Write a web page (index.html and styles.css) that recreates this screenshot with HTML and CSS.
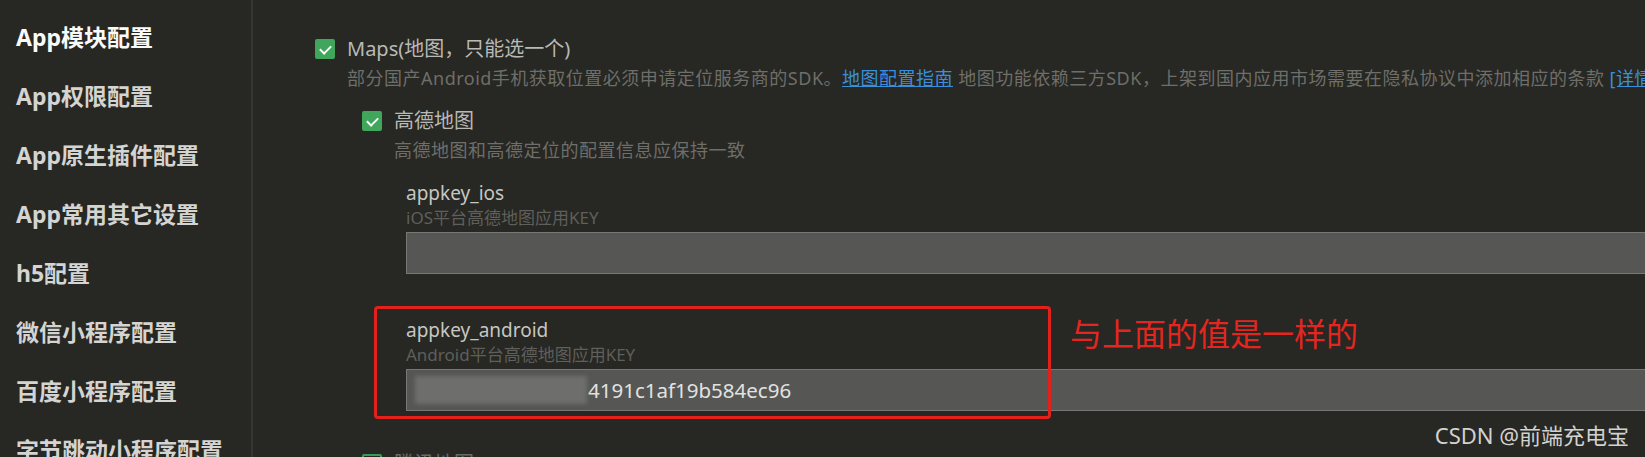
FILE: index.html
```html
<!DOCTYPE html>
<html lang="zh-CN">
<head>
    <meta charset="UTF-8">
    <title>App模块配置</title>
    <link rel="stylesheet" href="styles.css">
</head>
<body>
<div class="page">
    <!--左侧菜单-->
    <aside class="side">
        <ul class="menu">
            <li class="active">App模块配置</li>
            <li>App权限配置</li>
            <li>App原生插件配置</li>
            <li>App常用其它设置</li>
            <li>h5配置</li>
            <li>微信小程序配置</li>
            <li>百度小程序配置</li>
            <li>字节跳动小程序配置</li>
        </ul>
    </aside>

    <!--主要内容-->
    <main class="main">
        <div class="opt">
            <span class="check on"></span>
            <div class="opt-body">
                <p class="opt-title">Maps(地图，只能选一个)</p>
                <p class="opt-desc">部分国产Android手机获取位置必须申请定位服务商的SDK。<a href="#">地图配置指南</a> 地图功能依赖三方SDK，上架到国内应用市场需要在隐私协议中添加相应的条款 <a href="#">[详情]</a></p>

                <div class="opt sub">
                    <span class="check on"></span>
                    <div class="opt-body">
                        <p class="opt-title">高德地图</p>
                        <p class="opt-desc">高德地图和高德定位的配置信息应保持一致</p>

                        <div class="field">
                            <p class="field-name">appkey_ios</p>
                            <p class="field-desc">iOS平台高德地图应用KEY</p>
                            <div class="input"></div>
                        </div>

                        <div class="field marked">
                            <p class="field-name">appkey_android</p>
                            <p class="field-desc">Android平台高德地图应用KEY</p>
                            <div class="input">
                                <span class="blur"></span>
                                <span class="value">4191c1af19b584ec96</span>
                            </div>
                            <!-- 标注 -->
                            <div class="note-box"></div>
                            <p class="note-text">与上面的值是一样的</p>
                        </div>
                    </div>
                </div>

                <div class="opt sub next">
                    <span class="check"></span>
                    <div class="opt-body">
                        <p class="opt-title">腾讯地图</p>
                    </div>
                </div>
            </div>
        </div>
    </main>

    <div class="watermark">CSDN @前端充电宝</div>
</div>
</body>
</html>
```

FILE: styles.css
```css
*{
    margin: 0;
    padding: 0;
    list-style: none;
    box-sizing: border-box;
}
body{
    background-color: #272723;
    font-family: "Noto Sans", "Noto Sans CJK SC", sans-serif;
    overflow: hidden;
}
.page{
    width: 1645px;
    height: 457px;
    display: flex;
    position: relative;
    overflow: hidden;
}

/*左侧菜单*/
.side{
    width: 253px;
    flex-shrink: 0;
    border-right: 2px solid #37372f;
}
.menu{
    padding: 8px 0 0 16px;
}
.menu li{
    height: 59px;
    line-height: 59px;
    font-size: 23px;
    font-weight: bold;
    color: #d4d4d2;
    white-space: nowrap;
}
.menu .active{
    color: #fafafa;
}

/*主要内容*/
.main{
    flex: 1;
    min-width: 0;
    padding: 36px 0 0 62px;
}
.opt{
    display: flex;
    align-items: flex-start;
    gap: 12px;
}
.opt.sub{
    margin: 18px 0 0 15px;
}
.opt.next{
    margin-top: 40px;
}
.opt-body{
    flex: 1;
    min-width: 0;
}
.check{
    width: 20px;
    height: 20px;
    margin-top: 3px;
    flex-shrink: 0;
    border-radius: 2px;
    border: 2px solid #3c9a58;
    position: relative;
}
.check.on{
    background-color: #3fa65c;
    border-color: #3fa65c;
}
.check.on::after{
    content: "";
    position: absolute;
    left: 5px;
    top: 2px;
    width: 5px;
    height: 9px;
    border: solid #fff;
    border-width: 0 2px 2px 0;
    transform: rotate(45deg);
}
.opt-title{
    font-size: 20px;
    line-height: 26px;
    color: #b9b9b5;
    white-space: nowrap;
}
.next .opt-title{
    color: #6a6a66;
}
.opt-desc{
    margin-top: 4px;
    font-size: 18px;
    line-height: 24px;
    letter-spacing: 0.5px;
    color: #6e6e6a;
    white-space: nowrap;
}
.opt-desc a{
    color: #3a8fdc;
}

/*输入项*/
.field{
    margin: 18px -20px 0 12px;
    position: relative;
}
.field + .field{
    margin-top: 43px;
}
.field-name{
    font-size: 19px;
    line-height: 26px;
    color: #c6c6c2;
}
.field-desc{
    font-size: 17px;
    line-height: 24px;
    color: #5f5f5b;
    white-space: nowrap;
}
.input{
    margin-top: 2px;
    height: 42px;
    background-color: #565654;
    border: 1px solid #777775;
    display: flex;
    align-items: center;
    padding-left: 8px;
}
.blur{
    width: 172px;
    height: 28px;
    background-color: #6e6e6c;
    filter: blur(2px);
}
.value{
    margin-left: 1px;
    font-size: 20.5px;
    color: #e2e2e0;
}

/*标注*/
.note-box{
    position: absolute;
    left: -32px;
    top: -11px;
    width: 677px;
    height: 113px;
    border: 3px solid #e3201a;
    border-radius: 4px;
}
.note-text{
    position: absolute;
    left: 664px;
    top: -3px;
    font-size: 32px;
    line-height: 40px;
    color: #e3261f;
    white-space: nowrap;
}

.watermark{
    position: absolute;
    right: 16px;
    bottom: 10px;
    font-size: 22px;
    line-height: 24px;
    color: #d2d2d0;
}
```
